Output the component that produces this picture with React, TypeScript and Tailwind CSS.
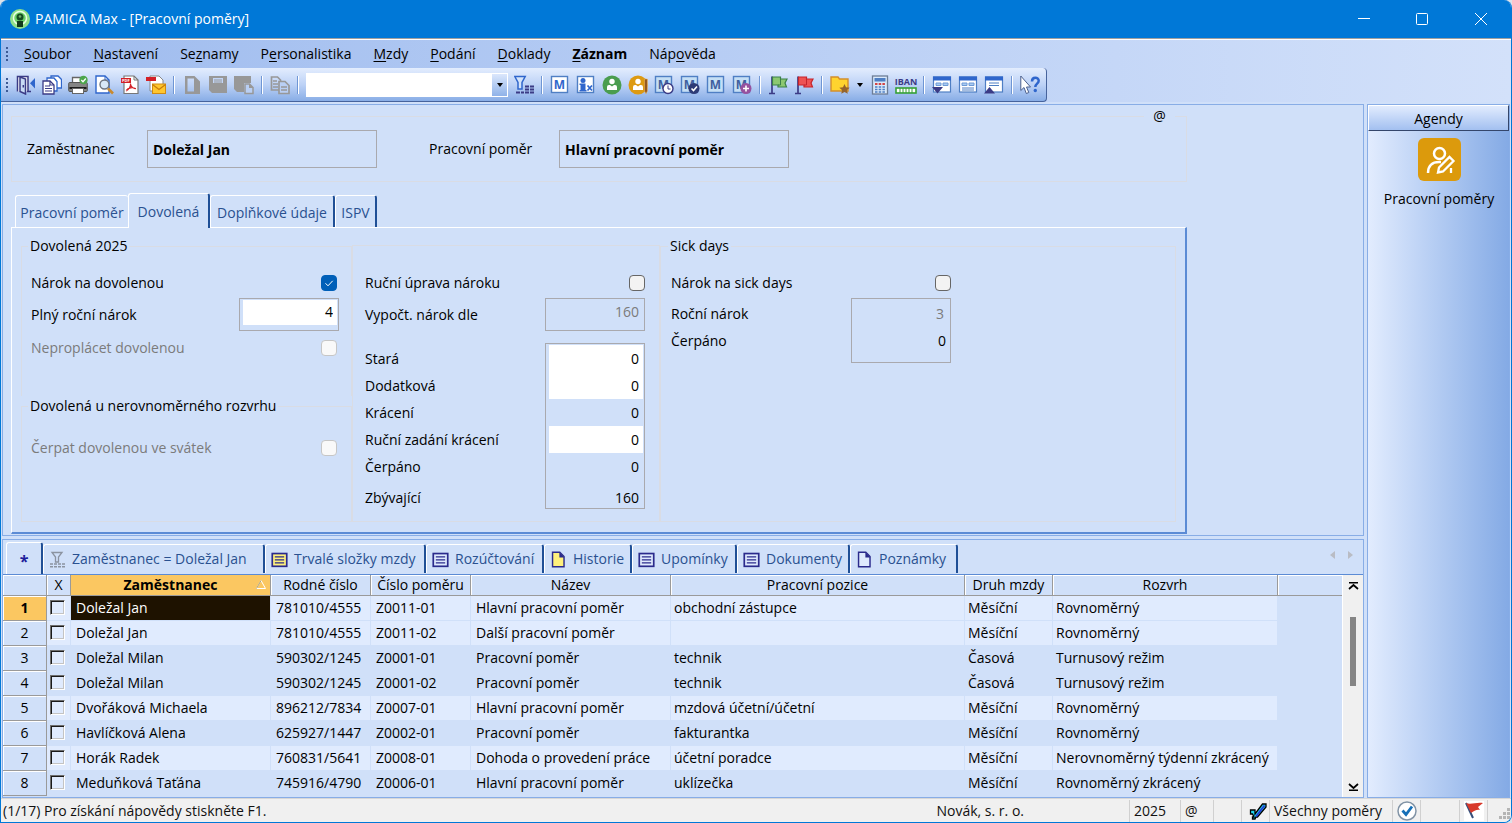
import { useState } from "react";
import type { ReactNode } from "react";
import clsx from "clsx";

const menuItems = [
  { before: "", key: "S", after: "oubor" },
  { before: "", key: "N", after: "astavení" },
  { before: "Se", key: "z", after: "namy" },
  { before: "P", key: "e", after: "rsonalistika" },
  { before: "", key: "M", after: "zdy" },
  { before: "", key: "P", after: "odání" },
  { before: "", key: "D", after: "oklady" },
  { before: "", key: "Z", after: "áznam", bold: true },
  { before: "Náp", key: "o", after: "věda" },
];

const rows = [
  ["Doležal Jan", "781010/4555", "Z0011-01", "Hlavní pracovní poměr", "obchodní zástupce", "Měsíční", "Rovnoměrný"],
  ["Doležal Jan", "781010/4555", "Z0011-02", "Další pracovní poměr", "", "Měsíční", "Rovnoměrný"],
  ["Doležal Milan", "590302/1245", "Z0001-01", "Pracovní poměr", "technik", "Časová", "Turnusový režim"],
  ["Doležal Milan", "590302/1245", "Z0001-02", "Pracovní poměr", "technik", "Časová", "Turnusový režim"],
  ["Dvořáková Michaela", "896212/7834", "Z0007-01", "Hlavní pracovní poměr", "mzdová účetní/účetní", "Měsíční", "Rovnoměrný"],
  ["Havlíčková Alena", "625927/1447", "Z0002-01", "Pracovní poměr", "fakturantka", "Měsíční", "Rovnoměrný"],
  ["Horák Radek", "760831/5641", "Z0008-01", "Dohoda o provedení práce", "účetní poradce", "Měsíční", "Nerovnoměrný týdenní zkrácený"],
  ["Meduňková Taťána", "745916/4790", "Z0006-01", "Hlavní pracovní poměr", "uklízečka", "Měsíční", "Rovnoměrný zkrácený"],
];

const lightRows = [0, 1, 4, 6];

const Svg = ({ children, size = 20 }: { children: ReactNode; size?: number }) => (
  <svg width={size} height={size} viewBox="0 0 20 20" fill="none" className="shrink-0">
    {children}
  </svg>
);

/* Toolbar icons */
const DoorIcon = () => (
  <Svg>
    <path d="M1.500 16.500v-15h10.500v15" fill="#fff" stroke="#3b3b85" strokeWidth="1.500" />
    <path d="M4 2l5.500 2v15l-5.500-2.500z" fill="#c9dcf5" stroke="#3b3b85" strokeWidth="1.500" />
    <path d="M7.300 10v2.500M11 16.500h4" stroke="#3b3b85" strokeWidth="1.500" />
    <path d="M19 3v10.500L14 8.250z" fill="#2f66cc" />
  </Svg>
);
const CopiesIcon = () => (
  <Svg>
    <path d="M9 1h7l3.500 3.500V13H9z" fill="#fff" stroke="#2f66cc" strokeWidth="1.300" />
    <path d="M5 3h7l3 3.500V16H5z" fill="#fff" stroke="#2f66cc" strokeWidth="1.300" />
    <path d="M1 6h7l4 4v9H1z" fill="#fff" stroke="#3b3b85" strokeWidth="1.300" />
    <path d="M8 6v4h4M3 11h5M3 13.500h7M3 16h7" stroke="#3b3b85" strokeWidth="1.200" />
  </Svg>
);
const PrinterIcon = () => (
  <Svg>
    <path d="M4.500 8V2.500h9V8" fill="#fff" stroke="#666" strokeWidth="1.300" />
    <rect x=".7" y="7.500" width="18.600" height="9" rx="1" fill="#858585" stroke="#555" />
    <rect x="1.500" y="12" width="17" height="2" fill="#1d1d1d" />
    <rect x="4.500" y="13.500" width="11" height="5" fill="#fff" stroke="#666" />
    <circle cx="15.500" cy="5" r="4.200" fill="#4ca64c" />
    <path d="M13.300 5l1.700 1.700 2.800-3.200" stroke="#fff" strokeWidth="1.300" />
  </Svg>
);
const PreviewIcon = () => (
  <Svg>
    <path d="M2 1h9l4 4v13H2z" fill="#fff" stroke="#2f66cc" strokeWidth="1.400" />
    <path d="M11 1v4h4" stroke="#2f66cc" />
    <circle cx="10.500" cy="9.500" r="4.500" fill="#d8e8f8" stroke="#6d7480" strokeWidth="1.400" />
    <path d="M14 13.500l5 5" stroke="#c98a2e" strokeWidth="2.600" />
  </Svg>
);
const PdfIcon = () => (
  <Svg>
    <path d="M4 1h10l4 4v13.500H4z" fill="#fff" stroke="#777" strokeWidth="1.200" />
    <path d="M14 1v4h4" stroke="#777" />
    <rect x="1" y="3" width="10" height="5" fill="#d32027" />
    <text x="2" y="7" fontSize="4" fontWeight="bold" fill="#fff">PDF</text>
    <path d="M6 16c3-1 5-5 4.500-7.500M10.500 9c.5 3 3 5 5.500 4.500M6.500 15c2-2 6-3 9-1.500" stroke="#d32027" strokeWidth="1.200" />
  </Svg>
);
const PdfMailIcon = () => (
  <Svg>
    <path d="M4 1h9l4 4v11H4z" fill="#fff" stroke="#888" />
    <rect x="0" y="2" width="10" height="4" fill="#d32027" />
    <rect x="6.500" y="9" width="13" height="9.500" fill="#ffc62e" stroke="#d08a10" />
    <path d="M6.500 9.500l6.500 5 6.500-5" stroke="#c77c0a" strokeWidth="1.200" />
  </Svg>
);
const GrayDocIcon = () => (
  <Svg>
    <path d="M3 1h9.500L18 6.500V19H3zM5.500 3.500v13H12v-13z" fill="#989898" fillRule="evenodd" />
  </Svg>
);
const GraySaveIcon = () => (
  <Svg>
    <path d="M1 1h18v17H4l-3-3z" fill="#989898" />
    <rect x="5" y="3" width="10" height="5" fill="#c3d6f7" />
    <path d="M6 5h8M6 7h8" stroke="#989898" />
  </Svg>
);
const GraySaveDocIcon = () => (
  <Svg>
    <path d="M0 1h17v7h-7v9H3l-3-3z" fill="#989898" />
    <path d="M11 9h4.500l3.500 3.500v6h-8z" fill="#b9cff4" stroke="#989898" strokeWidth="1.500" />
    <path d="M15 8.500v4.500h4.500z" fill="#989898" />
  </Svg>
);
const GrayCopyIcon = () => (
  <Svg>
    <path d="M1.500 2h6l3 3v10h-9z" stroke="#989898" strokeWidth="1.700" />
    <path d="M3 6h4M3 9h5M3 12h5" stroke="#989898" strokeWidth="1.500" />
    <path d="M9 6.500h6l4 4v8H9z" fill="#b9cff4" stroke="#989898" strokeWidth="1.700" />
    <path d="M11 12h6M11 15h6" stroke="#989898" strokeWidth="1.700" />
  </Svg>
);
const FunnelIcon = () => (
  <Svg>
    <path d="M.8 1.500h10.400L8 7.500V14H4V7.500z" fill="#d4e4fa" stroke="#2f66cc" strokeWidth="1.500" />
    <path d="M2 17.500h8M11 11.500h9M11 14.500h9M11 17.500h9" stroke="#3b3b85" strokeWidth="1.800" strokeDasharray="4 1" />
  </Svg>
);
const GrayFunnelIcon = () => (
  <svg width="17" height="17" viewBox="0 0 17 17" fill="none" className="shrink-0">
    <path d="M3 1.500h10L9.500 6v5h-3V6z" stroke="#8b93a0" strokeWidth="1.300" />
    <path d="M1 13h15M1 15.700h15" stroke="#8b93a0" strokeWidth="1.600" strokeDasharray="3 1" />
  </svg>
);
const Badge = ({ pale = false, children }: { pale?: boolean; children?: ReactNode }) => (
  <Svg>
    <rect x="1.500" y="1.500" width="16" height="16" fill={pale ? "#c5dff5" : "#fff"} stroke="#4f7fc4" strokeWidth="1.400" />
    <text x="9.500" y="14" textAnchor="middle" fontSize="12" fontWeight="bold" fill={pale ? "#3f5f9f" : "#2f66cc"}>M</text>
    {children}
  </Svg>
);
const PersonXIcon = () => (
  <Svg>
    <rect x="1.500" y="1.500" width="16" height="16" fill="#fff" stroke="#4f7fc4" strokeWidth="1.400" />
    <circle cx="7" cy="5.500" r="2.500" fill="#2f66cc" />
    <path d="M3.500 8.500h6v6.500h1v1.500h-7V15h1v-5h-1z" fill="#2f66cc" />
    <path d="M11.500 10.500l4.500 5M16 10.500l-4.500 5" stroke="#2f66cc" strokeWidth="1.700" />
  </Svg>
);
const PersonIcon = ({ amber = false }: { amber?: boolean }) => (
  <Svg>
    <circle cx="10" cy="10" r="9.500" fill={amber ? "#dd9a12" : "#4a9d4f"} />
    <circle cx="10" cy="6.500" r="2.700" fill="#fff" />
    <path d="M5 15v-3q0-2 2-2h1l2 1.500 2-1.500h1q2 0 2 2v3z" fill="#fff" />
    {amber && <path d="M16.500 4h3v12L18 19l-1.500-3z" fill="#96591f" stroke="#f2c16a" strokeWidth=".5" />}
  </Svg>
);
const FlagIcon = ({ red = false }: { red?: boolean }) => (
  <Svg>
    <path d="M4 1.500v17M1 18.500h6" stroke="#3b3b85" strokeWidth="1.700" />
    <path d="M4.500 2h8v2h6.500l-2 4 1.500 4H10V10H4.500z" fill={red ? "#ef5353" : "#8cc870"} stroke={red ? "#c5242c" : "#3b8048"} strokeWidth="1.200" />
    <path d="M12.500 4v6H10" stroke={red ? "#c5242c" : "#3b8048"} />
  </Svg>
);
const FolderIcon = () => (
  <Svg>
    <path d="M1 2h7l1.500 2H18v12H1z" fill="#ffd42f" stroke="#d48f2c" strokeWidth="1.400" />
    <path d="M14.500 9l1.500 3.300 3.700.4-2.700 2.400.8 3.600-3.300-1.800-3.200 1.800.7-3.600-2.700-2.400 3.700-.4z" fill="#94642d" />
  </Svg>
);
const CalculatorIcon = () => (
  <Svg>
    <rect x="2.500" y="1" width="15" height="18" fill="#d9e9fb" stroke="#6d7d96" strokeWidth="1.300" />
    <rect x="4.500" y="3" width="11" height="3.500" fill="#4f7fc4" />
    <path d="M5 9h10" stroke="#d24545" strokeWidth="1.800" strokeDasharray="2.500 1.200" />
    <path d="M5 12h10M5 14.500h10M5 17h10" stroke="#4f7fc4" strokeWidth="1.500" strokeDasharray="2.500 1.200" />
  </Svg>
);
const IbanIcon = () => (
  <svg width="24" height="20" viewBox="0 0 24 20" className="shrink-0">
    <text x="12" y="10" textAnchor="middle" fontSize="9" fontWeight="bold" fill="#3b3b85">IBAN</text>
    <rect x="2" y="13" width="20" height="5" fill="#fff" stroke="#35a035" strokeWidth="1.600" />
    <path d="M6 13v5M9 13v5M12 13v5M15 13v5M18 13v5" stroke="#35a035" />
  </svg>
);
const WindowIcon = ({ kind }: { kind: "down" | "plain" | "up" }) => (
  <Svg>
    <rect x="1.500" y="2" width="17" height="15" fill="#fff" stroke="#4f7fc4" strokeWidth="1.200" />
    <rect x="1" y="1.500" width="18" height="4" fill="#2f66cc" />
    {kind !== "up" && <path d="M4 8h5v2.500H4zM11 8h5v2.500h-5z" fill="#a9cbf2" stroke="#6e9ad6" />}
    {kind === "plain" && <path d="M4 13h12M4 15h12" stroke="#4f7fc4" />}
    {kind === "up" && <path d="M5 8h10M5 10.500h10" stroke="#4f7fc4" />}
    {kind === "down" && <path d="M0 12h11l-5.500 6.500z" fill="#3b3b85" />}
    {kind === "up" && <path d="M0 18.500h11L5.500 12z" fill="#3b3b85" />}
  </Svg>
);
const HelpIcon = () => (
  <Svg>
    <path d="M.8 1v14.500l3.200-3 2.300 6 2.500-1-2.300-5.500h4z" fill="#fff" stroke="#4b5f8c" />
    <path d="M12 6.500c0-5 6.700-4.500 6.700-.8 0 3-3.400 2.800-3.400 6.300" stroke="#2f66cc" strokeWidth="2.500" />
    <circle cx="15.300" cy="15.500" r="1.700" fill="#2f66cc" />
  </Svg>
);

const ToolButton = ({ label, children }: { label: string; children: ReactNode }) => (
  <button aria-label={label} className="flex h-7 w-[26px] items-center justify-center">
    {children}
  </button>
);
const Separator = () => (
  <div className="flex w-[10px] justify-center">
    <span className="h-[18px] w-[2px] border-l border-[#6f96d4] bg-white" />
  </div>
);
const Grip = () => (
  <div className="flex w-3 flex-col items-center gap-[2px]">
    <i className="size-[2px] bg-[#3c5a94]" />
    <i className="size-[2px] bg-[#3c5a94]" />
    <i className="size-[2px] bg-[#3c5a94]" />
    <i className="size-[2px] bg-[#3c5a94]" />
  </div>
);

/* Detail tab icons */
const SheetIcon = ({ yellow = false }: { yellow?: boolean }) => (
  <Svg size={17}>
    <rect x="1.500" y="3" width="17" height="15" fill={yellow ? "#fff07c" : "#dfeafd"} stroke="#2b2b8c" strokeWidth="2" />
    <path d="M4.500 7h11M4.500 10.500h11M4.500 14h11" stroke="#2b2b8c" strokeWidth="1.500" />
  </Svg>
);
const PageIcon = ({ yellow = false }: { yellow?: boolean }) => (
  <Svg size={17}>
    <path d="M3 1.500h8.500l5 5v12H3z" fill={yellow ? "#fff07c" : "#dfeafd"} stroke="#2b2b8c" strokeWidth="1.700" />
    <path d="M11 1.500v6h6z" fill="#2b2b8c" />
  </Svg>
);

const detailTabs = [
  { name: "Zaměstnanec = Doležal Jan", icon: <GrayFunnelIcon />, width: "w-[222px]" },
  { name: "Trvalé složky mzdy", icon: <SheetIcon yellow />, width: "w-[161px]" },
  { name: "Rozúčtování", icon: <SheetIcon />, width: "w-[118px]" },
  { name: "Historie", icon: <PageIcon yellow />, width: "w-[88px]" },
  { name: "Upomínky", icon: <SheetIcon />, width: "w-[105px]" },
  { name: "Dokumenty", icon: <SheetIcon />, width: "w-[113px]" },
  { name: "Poznámky", icon: <PageIcon />, width: "w-[108px]" },
];

const formTabs = [
  { name: "Pracovní poměr", width: "w-[113px]" },
  { name: "Dovolená", width: "w-[82px]" },
  { name: "Doplňkové údaje", width: "w-[125px]" },
  { name: "ISPV", width: "w-[42px]" },
];

const CheckRow = ({ id, label, checked, disabled }: { id: string; label: string; checked?: boolean; disabled?: boolean }) => (
  <div className="flex h-[29px] items-center justify-between pb-[2px]">
    <label htmlFor={id} className={clsx(disabled && "text-[#7b7b7b]")}>{label}</label>
    <span className="relative flex">
      <input
        id={id}
        type="checkbox"
        defaultChecked={checked}
        disabled={disabled}
        className="peer size-4 appearance-none rounded border border-[#666] bg-[#f3f3f3] checked:border-[#005fb8] checked:bg-[#005fb8] disabled:border-[#c6c6c6] disabled:bg-[#f9f9f9]"
      />
      <svg viewBox="0 0 16 16" className="pointer-events-none absolute inset-0 hidden peer-checked:block" fill="none">
        <path d="M4.500 8.300l2.500 2.500 4.700-5" stroke="#fff" />
      </svg>
    </span>
  </div>
);

const NumberBox = ({ id, value, muted }: { id: string; value: string; muted?: boolean }) => (
  <div className="h-[33px] w-[100px] border border-[#a9a9ae] p-px pl-[3px]">
    <input id={id} defaultValue={value} disabled={muted} className={clsx("h-[25px] w-full pr-1 pb-[3px] text-right", muted ? "text-[#7b7b7b]" : "bg-white")} />
  </div>
);

const balances = [
  { id: "stara", label: "Stará", value: "0", editable: true },
  { id: "dodatkova", label: "Dodatková", value: "0", editable: true },
  { id: "kraceni", label: "Krácení", value: "0" },
  { id: "rucni-kraceni", label: "Ruční zadání krácení", value: "0", editable: true },
  { id: "cerpano", label: "Čerpáno", value: "0" },
];

const TopForm = () => {
  const [tab, setTab] = useState("Dovolená");

  return (
    <section className="border border-[#88ade6] pt-px pb-px pl-2">
      <div className="w-[1176px] max-w-full">
        <fieldset className="border border-[#d9dce4] pb-[13px] pl-[15px]">
          <legend className="mr-[11px] ml-auto h-5 w-[31px] text-center leading-5">@</legend>
          <div className="flex items-center pt-1">
            <label htmlFor="zamestnanec" className="w-[120px]">Zaměstnanec</label>
            <input id="zamestnanec" defaultValue="Doležal Jan" className="h-[38px] w-[230px] border border-[#a9a9ae] px-[5px] font-bold" />
            <label htmlFor="pomer" className="ml-[52px] w-[130px]">Pracovní poměr</label>
            <input id="pomer" defaultValue="Hlavní pracovní poměr" className="h-[38px] w-[230px] border border-[#a9a9ae] px-[5px] font-bold" />
          </div>
        </fieldset>

        {/* Form tabs */}
        <div role="tablist" className="mt-[11px] flex items-end pl-1">
          {formTabs.map((item) => (
            <button
              key={item.name}
              role="tab"
              aria-selected={tab === item.name}
              onClick={() => setTab(item.name)}
              className={clsx(
                "whitespace-nowrap rounded-t-[3px] border-t border-l border-white pt-[2px] text-[#2a5190]",
                item.width,
                tab === item.name ? "relative z-10 -mb-px h-[35px] border-r-2 border-r-[#1f4f96] bg-[#d0e0f9] pb-px" : "h-8",
                item.name !== "Pracovní poměr" && "border-r-2 border-r-[#1f4f96]",
              )}
            >
              {item.name}
            </button>
          ))}
        </div>

        <div className="border-2 border-t border-l border-[#5b8bd5] border-t-white border-l-white px-[9px] pt-2 pb-[10px]">
          <div className="grid grid-cols-[331px_308px_1fr]">
            {/* Vacation entitlement */}
            <div className="flex flex-col">
              <fieldset className="h-[150px] border border-b-0 border-[#d9dce4] pr-3 pl-[9px]">
                <legend className="-ml-[3px] px-[2px] leading-5">Dovolená 2025</legend>
                <div className="pt-[13px]">
                  <div className="pr-[2px]">
                    <CheckRow id="narok" label="Nárok na dovolenou" checked />
                  </div>
                  <div className="flex items-center justify-between">
                    <label htmlFor="plny">Plný roční nárok</label>
                    <NumberBox id="plny" value="4" />
                  </div>
                  <div className="pt-[3px] pr-[2px]">
                    <CheckRow id="neproplacet" label="Neproplácet dovolenou" disabled />
                  </div>
                </div>
              </fieldset>
              <div className="h-[10px] border-x border-[#d9dce4]" />
              <fieldset className="flex-1 border border-[#d9dce4] pr-3 pl-[9px]">
                <legend className="-ml-[3px] px-[2px] leading-5">Dovolená u nerovnoměrného rozvrhu</legend>
                <div className="pt-[18px] pr-[2px]">
                  <CheckRow id="svatek" label="Čerpat dovolenou ve svátek" disabled />
                </div>
              </fieldset>
            </div>

            {/* Balances */}
            <fieldset className="mt-[9px] border border-[#d9dce4] pt-[23px] pr-[14px] pb-3 pl-[12px]">
              <CheckRow id="uprava" label="Ruční úprava nároku" />
              <div className="flex items-center justify-between">
                <label htmlFor="vypocteny">Vypočt. nárok dle</label>
                <NumberBox id="vypocteny" value="160" muted />
              </div>
              <div className="mt-3 flex justify-between">
                <div className="pt-[2px]">
                  {balances.map((item) => (
                    <label key={item.id} htmlFor={item.id} className="flex h-[27px] items-center">{item.label}</label>
                  ))}
                  <label htmlFor="zbyvajici" className="mt-2 block h-5 leading-5">Zbývající</label>
                </div>
                <div className="flex w-[100px] flex-col border border-[#a9a9ae] pt-px pr-px pl-[3px]">
                  {balances.map((item) => (
                    <input key={item.id} id={item.id} defaultValue={item.value} readOnly={!item.editable} className={clsx("h-[27px] w-full pr-1 text-right", item.editable && "bg-white")} />
                  ))}
                  <input id="zbyvajici" defaultValue="160" readOnly className="mt-2 h-5 w-full pr-1 text-right" />
                </div>
              </div>
            </fieldset>

            {/* Sick days */}
            <fieldset className="border border-[#d9dce4] pl-[10px]">
              <legend className="-ml-[3px] px-[2px] leading-5">Sick days</legend>
              <div className="w-[280px] pt-[13px]">
                <CheckRow id="sick" label="Nárok na sick days" />
                <div className="flex justify-between">
                  <div className="pt-[2px]">
                    <label htmlFor="rocni" className="flex h-[27px] items-center">Roční nárok</label>
                    <label htmlFor="sick-cerpano" className="flex h-[27px] items-center">Čerpáno</label>
                  </div>
                  <div className="h-[65px] w-[100px] border border-[#a9a9ae] pt-px">
                    <input id="rocni" defaultValue="3" disabled className="h-[27px] w-full pr-[6px] text-right text-[#7b7b7b]" />
                    <input id="sick-cerpano" defaultValue="0" readOnly className="h-[27px] w-full pr-1 text-right" />
                  </div>
                </div>
              </div>
            </fieldset>
          </div>
        </div>
      </div>
    </section>
  );
};

const headCell = "h-[21px] border-r border-b border-[#9a9a9a] p-0 font-normal leading-5 shadow-[inset_1px_1px_0_#fff]";

const EmployeeTable = () => (
  <section className="flex min-h-0 flex-1 flex-col overflow-hidden border border-[#88ade6]">
    <div className="flex h-[35px] shrink-0 items-end border-b border-[#5b8bd5] pl-[3px]">
      <div role="tablist" className="flex items-start">
        <button role="tab" aria-selected="true" className="flex h-[32px] w-[37px] items-center justify-center rounded-t-[3px] border-t border-r-2 border-l border-white border-r-[#1f4f96] pt-1 text-base leading-5 font-bold text-[#1d1d9b]">
          *
        </button>
        {detailTabs.map((item) => (
          <button
            key={item.name}
            role="tab"
            aria-selected="false"
            className={clsx("mt-[2px] flex h-[29px] items-center gap-[6px] whitespace-nowrap rounded-t-[3px] border-t border-r-2 border-l border-white border-r-[#1f4f96] pl-[5px] text-[#2a5190]", item.width)}
          >
            {item.icon}
            {item.name}
          </button>
        ))}
      </div>
      <div className="mr-[9px] mb-2 ml-auto flex gap-[13px] self-center pt-1">
        <button aria-label="Předchozí záložky"><svg width="6" height="8" viewBox="0 0 6 8"><path d="M6 0v8L1 4z" fill="#b9bcc4" /></svg></button>
        <button aria-label="Další záložky"><svg width="6" height="8" viewBox="0 0 6 8"><path d="M0 0v8l5-4z" fill="#b9bcc4" /></svg></button>
      </div>
    </div>

    <div className="flex min-h-0 flex-1">
      <div className="min-w-0 flex-1 overflow-hidden">
        <table className="w-full table-fixed border-separate border-spacing-0">
          <colgroup>
            <col className="w-[44px]" />
            <col className="w-6" />
            <col className="w-[200px]" />
            <col className="w-[100px]" />
            <col className="w-[100px]" />
            <col className="w-[200px]" />
            <col className="w-[294px]" />
            <col className="w-[88px]" />
            <col className="w-[225px]" />
            <col />
          </colgroup>
          <thead>
            <tr>
              <th className={headCell} />
              <th className={headCell}>X</th>
              <th className="relative h-[21px] border-r border-b border-[#9a9a9a] bg-[#fbc761] p-0 leading-5 font-bold">
                Zaměstnanec
                <svg width="10" height="9" viewBox="0 0 10 9" className="absolute top-[5px] right-1" fill="none">
                  <path d="M5 .5L.5 8.500h9z" stroke="#fff" />
                  <path d="M5 .5L.5 8.500" stroke="#b3a06e" />
                </svg>
              </th>
              {["Rodné číslo", "Číslo poměru", "Název", "Pracovní pozice", "Druh mzdy", "Rozvrh"].map((name) => (
                <th key={name} className={headCell}>{name}</th>
              ))}
              <th className="border-b border-[#9a9a9a] shadow-[inset_1px_1px_0_#fff]" />
            </tr>
          </thead>
          <tbody>
            {rows.map((row, index) => (
              <tr key={row[2]}>
                <th className={clsx("h-[25px] border-r border-b border-[#9a9a9a] p-0 shadow-[inset_1px_1px_0_#fff]", index === 0 ? "bg-[#fbc761] font-bold" : "font-normal")}>
                  {index + 1}
                </th>
                <td className={clsx("border-r border-b border-[#d0e0f9] p-0 pb-px pl-[3px]", lightRows.includes(index) && "bg-[#e0ebfe]")}>
                  <input
                    type="checkbox"
                    aria-label={`Vybrat řádek ${index + 1}`}
                    className="block size-[15px] appearance-none border border-[#6e6e6e] border-r-white border-b-white bg-[#e0ebfe] shadow-[inset_1px_1px_0_#1a1a1a,inset_-1px_-1px_0_#c4c4c4] checked:bg-[#1f4f96]"
                  />
                </td>
                {row.map((cell, i) => (
                  <td
                    key={i}
                    className={clsx(
                      "h-[25px] border-r border-b border-[#d0e0f9] p-0 whitespace-nowrap",
                      i < 4 ? "pl-[5px]" : "pl-[3px]",
                      index === 0 && i === 0 ? "bg-[#1e1200] text-white" : lightRows.includes(index) && "bg-[#e0ebfe]",
                    )}
                  >
                    {cell}
                  </td>
                ))}
                <td />
              </tr>
            ))}
          </tbody>
        </table>
      </div>
      {/* Scrollbar */}
      <div className="flex w-[21px] flex-col items-center border-l border-white bg-[#f0f0f0] pt-[7px] pb-[6px]">
        <button aria-label="Nahoru"><svg width="11" height="8" viewBox="0 0 11 8" className="block" fill="none"><path d="M1 .75h9M1 7l4.500-4L10 7" stroke="#000" strokeWidth="1.700" /></svg></button>
        <span className="mt-[27px] h-[69px] w-[6px] bg-[#858585]" />
        <button aria-label="Dolů" className="mt-auto"><svg width="11" height="8" viewBox="0 0 11 8" className="block" fill="none"><path d="M1 7.250h9M1 1l4.500 4L10 1" stroke="#000" strokeWidth="1.700" /></svg></button>
      </div>
    </div>
  </section>
);

const statusCell = "flex h-full items-center border-l border-[#d0d0d0]";

const App = () => {
  return (
    <div className="h-screen bg-[#dde3ea]">
      <div className="flex h-full flex-col overflow-hidden rounded-t-lg rounded-br-lg border-r border-b border-l border-[#0078d7] bg-[#d0e0f9] font-['Open_Sans',sans-serif] text-sm leading-5 text-black">
        {/* Title bar */}
        <header className="flex h-[38px] shrink-0 items-center bg-[#0078d7] pl-2 text-white">
          <svg width="22" height="22" viewBox="0 0 22 22" className="mr-1">
            <circle cx="11" cy="11" r="10" fill="#8fe08a" />
            <circle cx="11" cy="10" r="6.500" fill="#6bcf68" stroke="#e9ffe4" strokeWidth="1.500" />
            <circle cx="11" cy="9" r="3.500" fill="#164d22" />
            <path d="M8 13h6v6H8z" fill="#123b1b" />
            <circle cx="11" cy="8.500" r="1.300" fill="#6fae6a" />
          </svg>
          <h1 className="leading-5">PAMICA Max - [Pracovní poměry]</h1>
          <div className="ml-auto flex">
            <button aria-label="Minimalizovat" className="flex h-8 w-[58px] items-center justify-center">
              <svg width="12" height="12" viewBox="0 0 12 12"><path d="M0 5.500h12" stroke="#fff" /></svg>
            </button>
            <button aria-label="Maximalizovat" className="flex h-8 w-[58px] items-center justify-center">
              <svg width="12" height="12" viewBox="0 0 12 12" fill="none"><rect x=".5" y=".5" width="11" height="11" rx="1" stroke="#fff" /></svg>
            </button>
            <button aria-label="Zavřít" className="flex h-8 w-[60px] items-center justify-center">
              <svg width="12" height="12" viewBox="0 0 12 12"><path d="M0 0l12 12M12 0L0 12" stroke="#fff" /></svg>
            </button>
          </div>
        </header>

        {/* Menu and toolbar */}
        <div className="shrink-0 border-t border-[#a0a0a0] bg-gradient-to-r from-[#9ebbee] to-[#d3e1fa]">
          <nav className="flex h-[29px] items-center border-t border-white">
            <Grip />
            {menuItems.map((item) => (
              <button key={item.before + item.key + item.after} className={clsx("px-[11px] leading-6", item.bold && "font-bold")}>
                {item.before}
                <span className="underline underline-offset-2">{item.key}</span>
                {item.after}
              </button>
            ))}
          </nav>
          <div className="flex h-[34px] w-[1046px] items-center rounded-r-sm border-r border-b border-[#46639c] bg-gradient-to-b from-[#e3edfe] via-[#bdd2f6] to-[#88ade6]">
            <Grip />
            <ToolButton label="Zavřít agendu"><DoorIcon /></ToolButton>
            <ToolButton label="Kopie"><CopiesIcon /></ToolButton>
            <ToolButton label="Tisk"><PrinterIcon /></ToolButton>
            <ToolButton label="Náhled"><PreviewIcon /></ToolButton>
            <ToolButton label="PDF"><PdfIcon /></ToolButton>
            <ToolButton label="Odeslat PDF"><PdfMailIcon /></ToolButton>
            <Separator />
            <ToolButton label="Nový"><GrayDocIcon /></ToolButton>
            <ToolButton label="Uložit"><GraySaveIcon /></ToolButton>
            <ToolButton label="Uložit a nový"><GraySaveDocIcon /></ToolButton>
            <Separator />
            <ToolButton label="Kopírovat záznam"><GrayCopyIcon /></ToolButton>
            <Separator />
            <div className="relative mx-[3px] h-6 w-[202px]">
              <select aria-label="Hledat" className="h-full w-full appearance-none bg-white">
                <option></option>
              </select>
              <span className="pointer-events-none absolute top-0 right-0 flex h-full w-4 items-center justify-center border border-l-0 border-white bg-gradient-to-b from-[#dbe7fc] to-[#8fb2e8]">
                <svg width="6" height="4" viewBox="0 0 6 4"><path d="M0 0h6L3 4z" fill="#000" /></svg>
              </span>
            </div>
            <ToolButton label="Filtr"><FunnelIcon /></ToolButton>
            <Separator />
            <ToolButton label="Mzdy"><Badge /></ToolButton>
            <ToolButton label="Nepřítomnost"><PersonXIcon /></ToolButton>
            <ToolButton label="Personalistika"><PersonIcon /></ToolButton>
            <ToolButton label="Upravit osobu"><PersonIcon amber /></ToolButton>
            <ToolButton label="Čas mzdy">
              <Badge pale>
                <circle cx="14" cy="13.500" r="5" fill="#fff" stroke="#3b3b85" strokeWidth="1.400" />
                <path d="M14 10.500v3.500h2.500" stroke="#3b3b85" />
              </Badge>
            </ToolButton>
            <ToolButton label="Potvrdit mzdu">
              <Badge pale>
                <circle cx="14" cy="13.500" r="5.500" fill="#2d3b76" />
                <path d="M11.500 13.500l2 2 3.500-4" stroke="#fff" strokeWidth="1.600" />
              </Badge>
            </ToolButton>
            <ToolButton label="Mzda"><Badge pale /></ToolButton>
            <ToolButton label="Přidat mzdu">
              <Badge pale>
                <circle cx="14" cy="13.500" r="5.500" fill="#96529f" />
                <path d="M14 10.500v6M11 13.500h6" stroke="#fff" strokeWidth="1.600" />
              </Badge>
            </ToolButton>
            <Separator />
            <ToolButton label="Zelená vlajka"><FlagIcon /></ToolButton>
            <ToolButton label="Červená vlajka"><FlagIcon red /></ToolButton>
            <Separator />
            <ToolButton label="Oblíbené"><FolderIcon /></ToolButton>
            <button aria-label="Další oblíbené" className="flex w-[14px] justify-center">
              <svg width="6" height="4" viewBox="0 0 6 4"><path d="M0 0h6L3 4z" fill="#000" /></svg>
            </button>
            <ToolButton label="Kalkulačka"><CalculatorIcon /></ToolButton>
            <ToolButton label="IBAN kalkulačka"><IbanIcon /></ToolButton>
            <Separator />
            <ToolButton label="Tabulka dolů"><WindowIcon kind="down" /></ToolButton>
            <ToolButton label="Tabulka"><WindowIcon kind="plain" /></ToolButton>
            <ToolButton label="Tabulka nahoru"><WindowIcon kind="up" /></ToolButton>
            <Separator />
            <ToolButton label="Nápověda"><HelpIcon /></ToolButton>
          </div>
        </div>

        {/* Body */}
        <div className="flex min-h-0 flex-1 gap-[3px] px-px pt-[2px]">
          <main className="flex min-w-0 flex-1 flex-col gap-[3px]">
            <TopForm />
            <EmployeeTable />
          </main>
          <aside className="w-[143px] shrink-0 border border-[#88ade6] bg-gradient-to-r from-[#e2ecfe] to-[#84aae5]">
            <h2 className="h-[26px] border border-white border-r-[#34466b] border-b-[#34466b] bg-gradient-to-b from-[#e2ecfe] to-[#a3c0f0] text-center leading-[26px]">Agendy</h2>
            <a href="#pomery" className="flex flex-col items-center pt-[7px] pl-px">
              <svg width="43" height="43" viewBox="0 0 43 43" fill="none">
                <rect width="43" height="43" rx="6" fill="#dc9a0c" />
                <circle cx="21.500" cy="15.500" r="5.500" stroke="#fff" strokeWidth="2.500" />
                <path d="M10 35c0-7 4-11 11-11h2" stroke="#fff" strokeWidth="2.500" />
                <path d="M20 34.500l1-5 10.500-10.500 4 4L25 33.500zM33 30v5" stroke="#fff" strokeWidth="2.300" />
              </svg>
              <span className="mt-2">Pracovní poměry</span>
            </a>
          </aside>
        </div>

        {/* Status bar */}
        <footer className="flex h-6 shrink-0 items-center border-t border-[#d7d7d7] bg-[#f0f0f0] pt-px pl-[2px] text-[#111]">
          <span>(1/17) Pro získání nápovědy stiskněte F1.</span>
          <span className="mr-[105px] ml-auto">Novák, s. r. o.</span>
          <span className={clsx(statusCell, "w-[51px] pl-1")}>2025</span>
          <span className={clsx(statusCell, "w-[33px] pl-1")}>@</span>
          <span className={clsx(statusCell, "w-7")} />
          <span className={clsx(statusCell, "w-7 justify-end pr-[2px]")}>
            <svg width="18" height="18" viewBox="0 0 18 18" fill="none">
              <path d="M1.500 8h4.500v4l7.500-10h3.500v3L8.500 15H7l-1 2H3.500v-2H5l-1.500-3h-2z" fill="#1fd5ee" stroke="#000" strokeWidth="1.300" />
              <path d="M7 14.500l8.500-11" stroke="#2438d8" strokeWidth="1.800" />
            </svg>
          </span>
          <span className={clsx(statusCell, "w-[123px] pl-1 whitespace-nowrap")}>Všechny poměry</span>
          <span className={clsx(statusCell, "w-7 justify-center")}>
            <svg width="20" height="20" viewBox="0 0 20 20" fill="none">
              <circle cx="10" cy="10" r="9" fill="#fff" stroke="#8294a6" strokeWidth="1.500" />
              <path d="M5.500 9.500l3.500 4 6-8" stroke="#1670b8" strokeWidth="2.800" />
            </svg>
          </span>
          <span className={clsx(statusCell, "w-[39px]")} />
          <span className={clsx(statusCell, "w-7 justify-center")}>
            <svg width="20" height="20" viewBox="0 0 20 20" fill="none">
              <rect width="20" height="20" fill="#fff" />
              <path d="M2 2l7 15" stroke="#35507c" strokeWidth="2" />
              <path d="M2 2c5 2 10-1 17 0l-5 4 2 3c-3-1-6 1-9 3z" fill="#d8392b" />
            </svg>
          </span>
          <span className={clsx(statusCell, "w-6 items-end justify-end pb-[2px]")}>
            <svg width="12" height="12" viewBox="0 0 12 12" fill="#b5b5b5">
              <path d="M8 0h3v3H8zM4 4h3v3H4zM8 4h3v3H8zM0 8h3v3H0zM4 8h3v3H4zM8 8h3v3H8z" />
            </svg>
          </span>
        </footer>
      </div>
    </div>
  );
};

export default App;
